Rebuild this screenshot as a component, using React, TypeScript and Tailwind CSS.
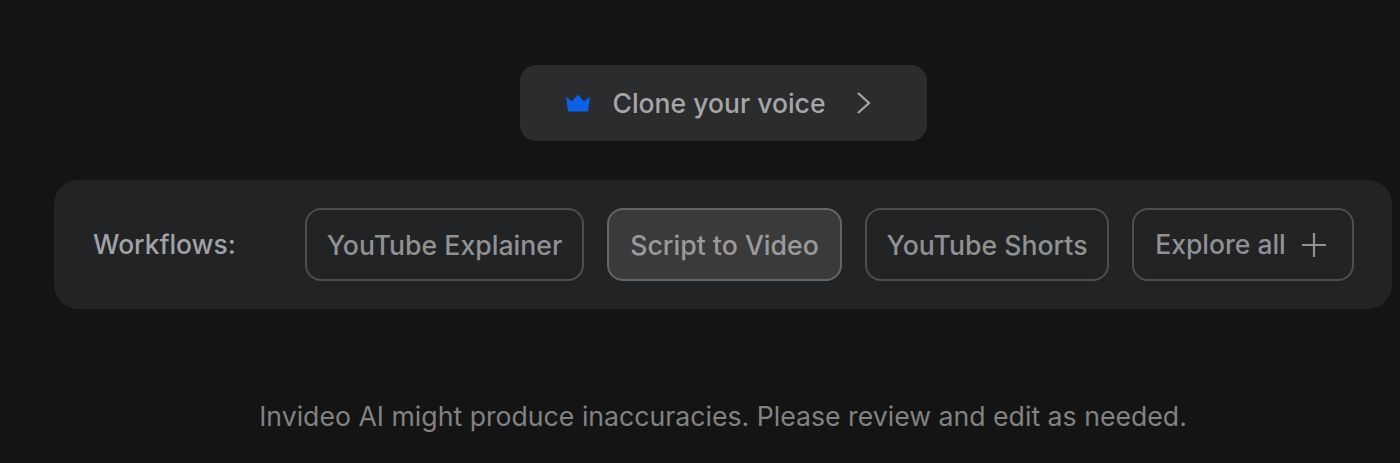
import React from 'react';

const workflows = [
  { label: 'YouTube Explainer', width: 'w-[279px]', active: false },
  { label: 'Script to Video', width: 'w-[235px]', active: true },
  { label: 'YouTube Shorts', width: 'w-[244px]', active: false },
];

export default function App() {
  return (
    <div className="h-[463px] overflow-hidden bg-[#141414] pl-[54px] pr-[8px] pt-[65px] font-['Inter',sans-serif]">
      {/* Clone voice */}
      <div className="flex justify-center">
        <button className="flex h-[76px] w-[407px] items-center rounded-[16px] bg-[#2b2c2e] pl-[45px] text-[26.5px] font-medium text-[#a6a6a6]">
          <svg width="26" height="18" viewBox="0 0 26 18" className="mr-[22px]">
            <path d="M1 2.5 L7 7.5 L13 0.5 L19 7.5 L25 2.5 L23 17.5 H3 Z" fill="#0b62e8" />
          </svg>
          <span className="pt-[2px]">Clone your voice</span>
          <svg width="16" height="24" viewBox="0 0 16 24" fill="none" className="ml-[31px]">
            <path d="M2 2 L13 12 L2 22" stroke="#a6a6a6" strokeWidth="2.2" />
          </svg>
        </button>
      </div>

      {/* Workflows */}
      <div className="mt-[39px] flex h-[129px] items-center rounded-[24px] bg-[#222325] pl-[39px]">
        <span className="w-[212px] text-[26.4px] font-medium text-[#a0a3a6]">Workflows:</span>
        <div className="flex gap-[23px]">
          {workflows.map(w => (
            <button
              key={w.label}
              className={`flex h-[73px] items-center justify-center rounded-[16px] border-2 text-[26.67px] font-medium ${w.width} ${
                w.active ? 'border-[#646566] bg-[#3a3a3b] text-[#9a9a9a]' : 'border-[#4d4e50] text-[#8f9193]'
              }`}
            >
              {w.label}
            </button>
          ))}
          <button className="flex h-[73px] w-[222px] items-center justify-center gap-[15px] rounded-[16px] border-2 border-[#4d4e50] pr-[4px] text-[26.5px] font-medium text-[#8f9193]">
            Explore all
            <svg width="26" height="26" viewBox="0 0 26 26" fill="none">
              <path d="M13 1 V25 M1 13 H25" stroke="#8f9193" strokeWidth="2.2" />
            </svg>
          </button>
        </div>
      </div>

      <p className="mt-[87px] text-center text-[26.67px] text-[#828282]">
        Invideo AI might produce inaccuracies. Please review and edit as needed.
      </p>
    </div>
  );
}
